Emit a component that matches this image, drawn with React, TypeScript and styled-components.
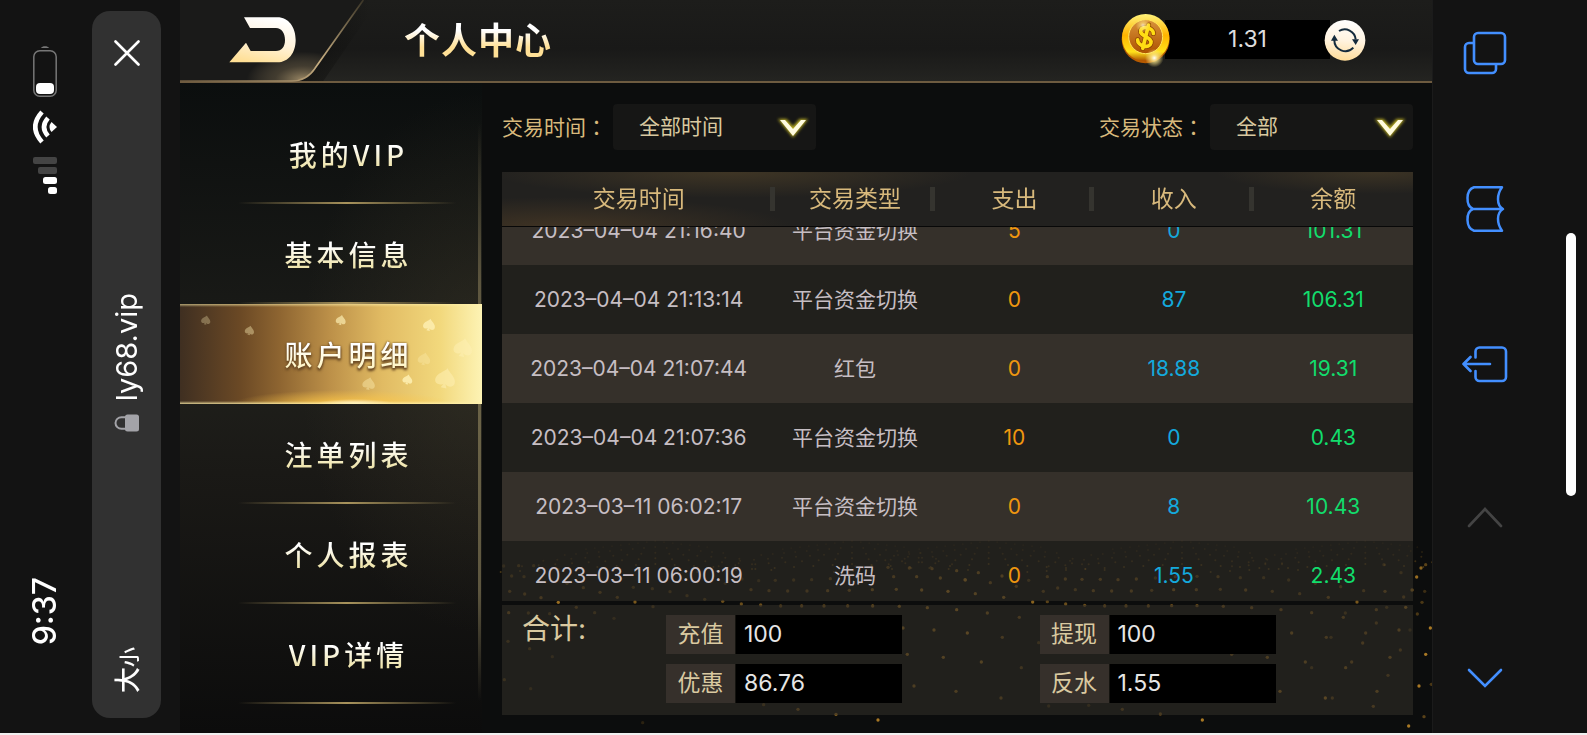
import React, { useLayoutEffect, useRef } from "react";
import styled, { createGlobalStyle } from "styled-components";

const GlobalStyle = createGlobalStyle`
  *, *::before, *::after { box-sizing: border-box; }
  body {
    margin: 0;
    background: #131313;
    color: #fff;
    font-family: Inter, "Noto Sans CJK SC", sans-serif;
  }
  button, select { font-family: inherit; }
  button {
    margin: 0;
    padding: 0;
    border: 0;
    background: none;
    color: inherit;
    cursor: pointer;
  }
  svg { display: block; }
`;

const gold = "#d8b97c";
const cream = "#d9c9a0";
const blue = "#438fff";

/* ---------- device frame ---------- */

const Screen = styled.div`
  display: grid;
  grid-template-columns: 180px minmax(0, 1fr) 155px;
  height: 100vh;
  min-height: 640px;
  border-bottom: 2px solid #f0f0f0;
`;

const BrowserSide = styled.aside`
  display: grid;
  grid-template-columns: 92px 69px;
  padding: 11px 0 15px;
  min-height: 0;
`;

const StatusColumn = styled.div`
  display: flex;
  flex-direction: column;
  align-items: center;
  justify-content: space-between;
  padding: 34px 2px 73px 0;
`;

const StatusIcons = styled.div`
  display: flex;
  flex-direction: column;
  align-items: center;
  gap: 13px;
`;

const VerticalText = styled.span<{ $size: number; $weight?: number }>`
  writing-mode: vertical-rl;
  transform: rotate(180deg);
  font-size: ${(p) => p.$size}px;
  font-weight: ${(p) => p.$weight ?? 400};
  line-height: 1;
  white-space: nowrap;
`;

const AddressBar = styled.div`
  display: grid;
  grid-template-rows: 1fr auto 1fr;
  justify-items: center;
  padding: 29px 0 25px;
  border-radius: 18px;
  background: #313131;
`;

const CloseButton = styled.button`
  align-self: start;
`;

const Address = styled.div`
  display: flex;
  flex-direction: column;
  align-items: center;
  gap: 13px;
  padding-bottom: 8px;
`;

const TextSizeButton = styled.button`
  align-self: end;
  writing-mode: vertical-rl;
  text-orientation: sideways;
  transform: rotate(180deg);
  padding-right: 4px;
  font-size: 26px;
  font-weight: 500;
  line-height: 32px;

  small {
    font-size: 20px;
  }
`;

const ToolSide = styled.aside`
  display: grid;
  grid-template-columns: 104px 1fr;
  border-left: 1px solid #1b1b1b;
`;

const ToolNav = styled.nav`
  display: flex;
  flex-direction: column;
  align-items: center;
  justify-content: space-between;
  padding: 30px 0 33px;
`;

const ToolButton = styled.button<{ $dim?: boolean }>`
  color: ${(p) => (p.$dim ? "#444" : blue)};
`;

const HandleTrack = styled.div`
  display: flex;
  align-items: center;
  padding: 0 0 4px 29px;
`;

const Handle = styled.div`
  width: 10px;
  height: 36%;
  border-radius: 5px;
  background: #fff;
`;

/* ---------- game shell ---------- */

const Game = styled.div`
  display: grid;
  grid-template-rows: 83px minmax(0, 1fr);
  min-width: 0;
  min-height: 0;
  background: #0c0d0d;
`;

const Header = styled.header`
  display: flex;
  align-items: center;
  padding-right: 66px;
  border-bottom: 2px solid #6e5b40;
  background: linear-gradient(#1d1d1b, #191918 60%, #242421);
`;

const BackButton = styled.button`
  margin-bottom: -2px;
`;

const Title = styled.h1`
  flex: 1;
  margin: 0 0 0 34px;
  font-size: 36px;
  font-weight: 700;
  line-height: 52px;
  letter-spacing: 1px;
  color: transparent;
  background: linear-gradient(#fff 30%, #ffe096 62%);
  background-clip: text;
`;

const Wallet = styled.div`
  display: flex;
  align-items: center;
`;

const Balance = styled.output`
  width: 165px;
  margin: 0 -6px 2px;
  background: #000;
  color: #dedede;
  font-size: 23px;
  line-height: 39px;
  text-align: center;
`;

const CoinIcon = styled.svg`
  position: relative;
  z-index: 1;
`;

const RefreshButton = styled.button`
  position: relative;
`;

const Body = styled.div`
  display: grid;
  grid-template-columns: 302px minmax(0, 1fr);
  min-height: 0;
`;

/* ---------- side menu ---------- */

const SideMenu = styled.nav`
  display: flex;
  flex-direction: column;
  padding-top: 21px;
  background:
    linear-gradient(transparent 3%, #5d563f 28%, #6b6347 50%, #5d563f 75%, transparent 92%) no-repeat 298px 20px / 3px 100%,
    radial-gradient(180px 270px at 300px 280px, rgba(80, 72, 50, 0.32), transparent),
    linear-gradient(#0b0e0e, #1e1e1a 48%, #1a1916 60%, #0c0c0c);
`;

const MenuItem = styled.button<{ $active?: boolean }>`
  position: relative;
  height: 100px;
  padding-left: 35px;
  font-family: "Noto Sans CJK SC", sans-serif;
  font-size: 28px;
  font-weight: 500;
  line-height: 40px;
  letter-spacing: 4px;
  background: ${(p) =>
    p.$active
      ? `linear-gradient(rgba(255,240,170,.6), transparent 3%, transparent 97%, rgba(255,240,170,.8)),
         radial-gradient(40px 5px at 58% 100%, #fffce8, transparent),
         radial-gradient(110px 14px at 54% 100%, rgba(255,200,70,.9), transparent),
         linear-gradient(90deg, #3f2f21, #6b4925 20%, #8e6531 33%, #bd9149 50%, #e1bb63 67%, #f2d87c 86%, #fdf3b4)`
      : `linear-gradient(90deg, transparent, #a8935c 50%, transparent) no-repeat 58px 98px / 218px 2px`};
`;

const MenuText = styled.span<{ $active?: boolean }>`
  position: relative;
  color: transparent;
  background: linear-gradient(#fff 30%, ${(p) => (p.$active ? "#fff6c8" : "#efe5ae")} 80%);
  background-clip: text;
  filter: ${(p) => (p.$active ? "drop-shadow(0 2px 1px #6b4a24) drop-shadow(0 0 1px #6b4a24)" : "none")};
`;

const Spades = styled.svg`
  position: absolute;
  inset: 0;
`;

/* ---------- account details ---------- */

const Main = styled.main`
  position: relative;
  display: flex;
  flex-direction: column;
  min-height: 0;
  padding: 21px 19px 18px 20px;
`;

const DotField = styled.svg`
  position: absolute;
  right: 0;
  bottom: 0;
  width: 100%;
  height: 203px;
`;

const Filters = styled.div`
  position: relative;
  display: flex;
  justify-content: space-between;
  height: 46px;
  margin-bottom: 22px;
`;

const Filter = styled.div`
  display: flex;
  align-items: center;
  gap: 6px;
`;

const FilterLabel = styled.label`
  color: ${gold};
  font-size: 21px;
  line-height: 46px;

  span {
    font-family: "Noto Sans CJK TC", sans-serif;
  }
`;

const SelectBox = styled.div`
  position: relative;
  width: 203px;

  svg {
    position: absolute;
    top: 9px;
    right: 6px;
    pointer-events: none;
  }
`;

const Select = styled.select`
  display: block;
  appearance: none;
  width: 100%;
  height: 46px;
  padding: 0 48px 2px 26px;
  border: 0;
  border-radius: 4px;
  background: #161615;
  color: ${cream};
  font-size: 21px;
`;

const TableScroller = styled.div`
  position: relative;
  flex: 1;
  min-height: 0;
  margin-bottom: 4px;
  overflow-y: auto;
  scrollbar-width: none;
`;

const Table = styled.table`
  width: 100%;
  table-layout: fixed;
  border-spacing: 0;
  text-align: center;

  thead {
    position: sticky;
    top: 0;
    background:
      radial-gradient(240px 26px at 230px 0, rgba(98, 78, 44, 0.45), transparent),
      radial-gradient(230px 30px at 60px 100%, rgba(100, 74, 42, 0.45), transparent),
      radial-gradient(160px 22px at 96% 0, rgba(98, 78, 44, 0.4), transparent),
      #22211f;
  }
`;

const HeadCell = styled.th<{ $first?: boolean }>`
  width: ${(p) => (p.$first ? "30%" : "17.5%")};
  height: 55px;
  padding: 0;
  border-bottom: 1px solid #080808;
  color: ${gold};
  font-size: 23px;
  font-weight: 400;
  line-height: 28px;

  &:not(:last-child) {
    background: linear-gradient(#35342f, #35342f) no-repeat right center / 5px 24px;
  }
`;

const Row = styled.tr`
  background: rgba(49, 45, 38, 0.6);

  &:nth-child(odd) {
    background: rgba(81, 71, 62, 0.6);
  }
`;

const Cell = styled.td<{ $tone?: string }>`
  height: 69px;
  padding: 0;
  color: ${(p) => p.$tone ?? "#c6bec3"};
  font-size: 21px;
  line-height: 28px;
  white-space: nowrap;
`;

const Totals = styled.section`
  position: relative;
  display: grid;
  grid-template-columns: 144px 1fr 1fr;
  height: 110px;
  padding: 10px 0 0 20px;
  background: rgba(49, 45, 38, 0.6);
`;

const TotalsTitle = styled.h2`
  margin: 0;
  color: ${cream};
  font-size: 28px;
  font-weight: 400;
  line-height: 28px;
`;

const TotalsList = styled.dl`
  display: flex;
  flex-direction: column;
  gap: 10px;
  margin: 0;
`;

const Total = styled.div`
  display: flex;
  height: 39px;
  font-size: 23px;
  line-height: 38px;

  dt {
    width: 69px;
    background: #36302b;
    color: ${cream};
    text-align: center;
  }

  dd {
    width: 167px;
    margin: 0;
    padding-left: 8px;
    border-left: 1px solid #14130f;
    background: #000;
    color: #e6e6e6;
  }
`;

/* ---------- data ---------- */

const menu = ["我的VIP", "基本信息", "账户明细", "注单列表", "个人报表", "VIP详情"];
const activeMenu = "账户明细";

const columns = ["交易时间", "交易类型", "支出", "收入", "余额"];

const records = [
  ["2023–04–04 21:16:40", "平台资金切换", "5", "0", "101.31"],
  ["2023–04–04 21:13:14", "平台资金切换", "0", "87", "106.31"],
  ["2023–04–04 21:07:44", "红包", "0", "18.88", "19.31"],
  ["2023–04–04 21:07:36", "平台资金切换", "10", "0", "0.43"],
  ["2023–03–11 06:02:17", "平台资金切换", "0", "8", "10.43"],
  ["2023–03–11 06:00:19", "洗码", "0", "1.55", "2.43"],
];

const tones = [undefined, undefined, "#f0970f", "#14a9dc", "#12dd6c"];

const totals = [
  [["充值", "100"], ["优惠", "86.76"]],
  [["提现", "100"], ["反水", "1.55"]],
];

const spades: [number, number, number, number][] = [
  [78, 48, 14, 0.3], [209, 79, 14, 0.4], [483, 48, 15, 0.65], [748, 62, 18, 0.75],
  [850, 130, 28, 0.45], [733, 164, 19, 0.3], [797, 222, 30, 0.5], [683, 226, 15, 0.8], [567, 238, 19, 0.4],
];

/* Sparkling dots near the bottom edge: x, y, brightness */
const sparkles: [number, number, number][] = [
  [65, 108, .3], [110, 107, .4], [155, 107, .4], [89, 138, .4], [126, 140, .4], [83, 184, .5], [128, 192, .5],
  [177, 203, .6], [229, 217, .9], [80, 248, .6], [139, 249, .4], [203, 251, .4], [283, 232, .5], [338, 248, .4],
  [78, 334, .4], [143, 356, .4], [211, 380, .3], [67, 449, .4], [146, 476, .3], [396, 265, .3], [513, 230, .4],
  [459, 216, .7], [406, 202, .5], [354, 187, .5], [304, 173, .5], [255, 160, .5], [454, 172, .4], [511, 176, .4],
  [564, 185, .4], [615, 197, .4], [668, 208, .4], [722, 214, .6], [778, 222, .6], [836, 225, .6], [896, 228, .5],
  [959, 228, .6], [1026, 228, .6], [1097, 228, .6], [1172, 228, .7], [1252, 229, .8], [1336, 233, .8], [1424, 239, .9],
  [807, 179, .5], [861, 182, .5], [917, 183, .5], [975, 183, .5], [1037, 182, .6], [1102, 181, .6], [1171, 179, .7],
  [1243, 178, .7], [1319, 180, .8], [1398, 184, .9], [730, 160, .3], [780, 147, .3], [830, 152, .3], [880, 151, .4],
  [935, 150, .4], [989, 149, .4], [1045, 146, .5], [1170, 140, .5], [1235, 140, .6], [1304, 140, .7], [1375, 144, .7],
  [1450, 150, .8], [1480, 191, .8], [1565, 202, .8], [1424, 122, .7], [1350, 116, .6], [1282, 114, .6], [1218, 112, .5],
  [1263, 294, .8], [1356, 300, .8], [1456, 309, .9], [1276, 373, .8], [1384, 382, .8], [1498, 396, .8],
  [1296, 468, .7], [1422, 484, .7], [1557, 504, .6], [845, 524, .4], [948, 538, .6], [1062, 553, .8], [1188, 570, 1],
  [482, 578, .2], [1516, 249, .7], [1612, 262, .6], [1561, 322, .6], [1618, 413, .5], [1670, 338, .4], [1700, 528, .3],
  [1820, 526, .3], [1921, 538, .5], [2035, 552, .6], [2161, 570, 1], [1652, 216, .8], [1696, 215, .5], [1751, 222, .6],
  [1808, 226, .6], [1868, 228, .6], [1932, 228, .6], [1999, 228, .6], [2069, 227, .6], [2145, 227, .6], [2224, 229, .6],
  [2309, 233, .6], [2397, 239, .6], [2489, 248, .6], [2584, 262, .6], [2429, 309, .7], [2533, 322, .6], [2547, 322, .4],
  [2356, 382, .7], [2249, 373, .6], [2470, 396, .7], [2489, 413, .4], [2591, 413, .7], [2609, 396, .6], [2394, 484, .8],
  [2530, 504, .9], [2551, 504, .5], [2685, 484, .7], [2674, 529, .6], [2718, 436, .5], [2724, 382, .7], [2755, 360, .5],
  [2751, 300, .7], [2784, 300, .3], [2642, 339, .6], [2651, 309, .6], [2683, 279, .5], [2683, 239, .6], [2714, 232, .4],
  [2771, 232, .8], [2590, 249, .4], [2625, 216, .7], [2539, 202, .6], [2453, 191, .5], [2371, 184, .5], [2291, 180, .6],
  [2215, 178, .5], [2143, 179, .6], [2075, 179, .7], [2009, 181, .5], [1948, 183, .6], [1889, 183, .6], [1834, 182, .6],
  [1780, 179, .5], [1727, 174, .5], [1684, 184, .5], [1603, 169, .6], [1525, 158, .6], [1449, 149, .7], [1489, 128, .7],
  [1560, 138, .7], [1640, 151, .4], [1696, 140, .5], [1750, 147, .6], [1800, 148, .6], [1855, 148, .6], [1908, 149, .6],
  [1963, 147, .6], [2020, 144, .4], [2080, 140, .5], [2145, 139, .5], [2208, 140, .5], [2275, 143, .4], [2345, 143, .4],
  [2420, 150, .4], [2500, 160, .5], [2576, 170, .5], [2645, 182, .5], [2709, 184, .6], [2765, 201, .5], [2790, 180, .8],
  [2804, 141, .9], [2817, 114, .8], [2831, 104, .5], [2845, 294, 1], [2831, 373, 1], [2811, 468, 1], [2848, 463, .4],
  [2780, 588, 1], [2826, 560, .5], [2806, 252, .4], [2820, 217, .4], [2828, 184, .3], [2757, 128, .4], [2706, 104, .4],
];

/* Faint rows of dots that fan out from a vanishing point */
const fans = [520, 1110, 1520, 2100, 2650].flatMap((cx) =>
  [-8, -7, -6, -5, -4, -3, -2, -1, 0, 1, 2, 3, 4, 5, 6].flatMap((ray) =>
    [0, 1, 2, 3, 4].map((step) => ({
      x: cx + ray * (26 + step * 8),
      y: 34 + step * 17 + Math.abs(ray) * 3,
      o: 0.1 + step * 0.07,
    })),
  ),
);

/* ---------- drawings ---------- */

const BackDrawing = () => (
  <svg width="190" height="83" viewBox="0 0 570 249" aria-hidden="true">
    <defs>
      <linearGradient id="arrow" x1="0.6" y1="0" x2="0.3" y2="1">
        <stop offset="0" stopColor="#fff" />
        <stop offset="0.5" stopColor="#fff3dc" />
        <stop offset="1" stopColor="#ffdf95" />
      </linearGradient>
      <linearGradient id="edge" x1="0" y1="1" x2="1" y2="0">
        <stop offset="0" stopColor="#6e5b40" />
        <stop offset="0.5" stopColor="#c9b083" />
        <stop offset="1" stopColor="#3b3527" />
      </linearGradient>
      <radialGradient id="cornerGlow" cx="370" cy="240" r="170" gradientUnits="userSpaceOnUse" gradientTransform="translate(0 120) scale(1 .5)">
        <stop offset="0" stopColor="#b39d74" stopOpacity="0.85" />
        <stop offset="0.5" stopColor="#8d7b5a" stopOpacity="0.35" />
        <stop offset="1" stopColor="#b39d74" stopOpacity="0" />
      </radialGradient>
      <linearGradient id="fold" x1="0" x2="1">
        <stop offset="0" stopColor="#0b0b0a" />
        <stop offset="1" stopColor="#0b0b0a" stopOpacity="0" />
      </linearGradient>
    </defs>
    <path d="M550 0 405 210Q385 240 350 243H430L570 40V0Z" fill="url(#fold)" opacity="0.6" />
    <path d="M0 0H550L405 205Q380 243 335 243H0Z" fill="#1a1a19" />
    <path d="M0 0H550L405 205Q380 243 335 243H0Z" fill="url(#cornerGlow)" />
    <path d="M0 243H335Q380 243 405 205L550 0" fill="none" stroke="url(#edge)" strokeWidth="5" />
    <path d="M192 52H292C326 52 347 82 347 120S326 187 292 187H148L198 128 212 153H288C305 153 315 140 315 120S305 84 288 84H210Z" fill="url(#arrow)" />
  </svg>
);

const Coin = () => (
  <CoinIcon width="50" height="54" viewBox="0 0 150 162" aria-hidden="true">
    <defs>
      <linearGradient id="coinRim" x1="0" y1="0" x2="0" y2="1">
        <stop offset="0" stopColor="#fff27a" />
        <stop offset="0.45" stopColor="#ffb400" />
        <stop offset="0.8" stopColor="#ffe11a" />
        <stop offset="1" stopColor="#a84a00" />
      </linearGradient>
      <linearGradient id="coinFace" x1="0" y1="0" x2="0" y2="1">
        <stop offset="0" stopColor="#d9923a" />
        <stop offset="1" stopColor="#ad5200" />
      </linearGradient>
      <radialGradient id="flare">
        <stop offset="0" stopColor="#fff" />
        <stop offset="0.35" stopColor="#ffe98a" stopOpacity="0.8" />
        <stop offset="1" stopColor="#ffe98a" stopOpacity="0" />
      </radialGradient>
    </defs>
    <circle cx="74" cy="76" r="72" fill="#b65a00" />
    <circle cx="74" cy="71" r="71" fill="url(#coinRim)" />
    <circle cx="74" cy="68" r="51" fill="url(#coinFace)" stroke="#ffe55a" strokeWidth="3" />
    <g transform="rotate(14 74 68)" fill="none" strokeLinecap="round">
      <path d="M74 32V104M94 53C92 38 56 36 55 53 54 72 94 63 94 83 94 102 56 100 53 83" stroke="#8c4200" strokeWidth="15" />
      <path d="M74 32V104M94 53C92 38 56 36 55 53 54 72 94 63 94 83 94 102 56 100 53 83" stroke="#ffdc14" strokeWidth="11" />
    </g>
    <circle cx="66" cy="34" r="22" fill="url(#flare)" opacity="0.7" />
    <circle cx="100" cy="132" r="28" fill="url(#flare)" />
  </CoinIcon>
);

const RefreshDrawing = () => (
  <svg width="42" height="42" viewBox="0 0 126 126" aria-hidden="true">
    <defs>
      <linearGradient id="disc" x1="0.5" y1="0" x2="0.4" y2="1">
        <stop offset="0" stopColor="#fff" />
        <stop offset="0.5" stopColor="#fff3e0" />
        <stop offset="1" stopColor="#ffdc98" />
      </linearGradient>
    </defs>
    <circle cx="63" cy="61" r="61" fill="url(#disc)" />
    <g fill="none" stroke="#142a3c" strokeWidth="6">
      <path d="M45 33A33 33 0 0 1 95 58" />
      <path d="M88 83A33 33 0 0 1 31 60" />
    </g>
    <path d="M84 58H105L95 75ZM21 62H42L31 44Z" fill="#142a3c" />
  </svg>
);

const GlowChevron = () => (
  <svg width="34" height="30" viewBox="0 0 34 30" aria-hidden="true">
    <defs>
      <filter id="chevGlow" x="-30%" y="-30%" width="160%" height="160%">
        <feGaussianBlur stdDeviation="1.5" />
      </filter>
    </defs>
    <path d="M4 7H10L17 15 24 7H30L17 23Z" fill="#c9bd28" stroke="#b0a424" strokeWidth="2" filter="url(#chevGlow)" />
    <path d="M4 7H9L17 16 25 7H30L17 23Z" fill="#fffbe0" />
  </svg>
);

const App = () => {
  const scroller = useRef<HTMLDivElement>(null);

  /* Open with the newest record partly scrolled under the heading */
  useLayoutEffect(() => {
    if (scroller.current) scroller.current.scrollTop = 31;
  }, []);

  return (
    <>
      <GlobalStyle />
      <Screen>
        <BrowserSide>
          <StatusColumn>
            <StatusIcons>
              <svg width="24" height="52" viewBox="0 0 24 52" aria-hidden="true">
                <path d="M8 3C9 .5 15 .5 16 3Z" fill="#777" />
                <rect x="0.8" y="5.8" width="22.4" height="45.4" rx="6" fill="none" stroke="#777" strokeWidth="1.5" />
                <rect x="3" y="38" width="18" height="11" rx="4" fill="#fff" />
              </svg>
              <svg width="24" height="34" viewBox="0 0 24 34" fill="#fff" aria-hidden="true">
                <path d="M24 17 18.500 12Q14.500 17 18.500 22Z" />
                <path d="M9 2Q-4.500 17 9 32" fill="none" stroke="#fff" strokeWidth="4.600" />
                <path d="M15 8Q7 17 15 26" fill="none" stroke="#fff" strokeWidth="4.600" />
              </svg>
              <svg width="24" height="37" viewBox="0 0 24 37" fill="#fff" aria-hidden="true">
                <rect width="24" height="7" rx="2" fill="#444" />
                <rect x="5" y="10" width="19" height="7" rx="2" fill="#444" />
                <rect x="10" y="20" width="14" height="7" rx="2.500" />
                <rect x="15" y="30" width="9" height="7" rx="2.500" />
              </svg>
            </StatusIcons>
            <VerticalText $size={32} $weight={500}>9:37</VerticalText>
          </StatusColumn>
          <AddressBar>
            <CloseButton aria-label="关闭">
              <svg width="26" height="26" viewBox="0 0 26 26" stroke="#fff" strokeWidth="2.600" strokeLinecap="round" aria-hidden="true">
                <path d="M1.500 1.500 24.500 24.500M24.500 1.500 1.500 24.500" />
              </svg>
            </CloseButton>
            <Address>
              <VerticalText $size={29}>ly68.vip</VerticalText>
              <svg width="26" height="18" viewBox="0 0 26 18" aria-hidden="true">
                <path d="M12 3.200H7.500A6 5.800 0 0 0 7.500 14.800H12" fill="none" stroke="#a3a3a8" strokeWidth="2" />
                <rect x="11" y="0.500" width="14" height="17" rx="2.500" fill="#a3a3a8" />
              </svg>
            </Address>
            <TextSizeButton>大<small>小</small></TextSizeButton>
          </AddressBar>
        </BrowserSide>

        <Game>
          <Header>
            <BackButton aria-label="返回"><BackDrawing /></BackButton>
            <Title>个人中心</Title>
            <Wallet>
              <Coin />
              <Balance>1.31</Balance>
              <RefreshButton aria-label="刷新"><RefreshDrawing /></RefreshButton>
            </Wallet>
          </Header>
          <Body>
            <SideMenu>
              {menu.map((name) => {
                const active = name === activeMenu;
                return (
                  <MenuItem key={name} $active={active} aria-current={active ? "page" : undefined}>
                    {active && (
                      <Spades width="302" height="100" viewBox="0 0 906 300" aria-hidden="true">
                        {spades.map(([x, y, r, o]) => (
                          <path
                            key={x}
                            transform={`translate(${x} ${y}) rotate(12) scale(${r / 10})`}
                            d="M0-10C2-6 10-3 10 3 10 8 4 9 1 6L3 10H-3L-1 6C-4 9-10 8-10 3-10-3-2-6 0-10Z"
                            fill="#fff2b8"
                            opacity={o}
                          />
                        ))}
                      </Spades>
                    )}
                    <MenuText $active={active}>{name}</MenuText>
                  </MenuItem>
                );
              })}
            </SideMenu>

            <Main>
              <DotField viewBox="0 0 2850 609" preserveAspectRatio="xMaxYMax slice" fill="#a87824" aria-hidden="true">
                {fans.map((d, i) => <circle key={i} cx={d.x} cy={d.y} r="3" opacity={d.o} />)}
                {sparkles.map(([x, y, o], i) => <circle key={i} cx={x} cy={y} r="5" opacity={o} />)}
              </DotField>
              <Filters>
                <Filter>
                  <FilterLabel htmlFor="time">交易时间<span>：</span></FilterLabel>
                  <SelectBox>
                    <Select id="time"><option>全部时间</option></Select>
                    <GlowChevron />
                  </SelectBox>
                </Filter>
                <Filter>
                  <FilterLabel htmlFor="state">交易状态<span>：</span></FilterLabel>
                  <SelectBox>
                    <Select id="state"><option>全部</option></Select>
                    <GlowChevron />
                  </SelectBox>
                </Filter>
              </Filters>

              <TableScroller ref={scroller}>
                <Table>
                  <thead>
                    <tr>
                      {columns.map((c, i) => <HeadCell key={c} scope="col" $first={i === 0}>{c}</HeadCell>)}
                    </tr>
                  </thead>
                  <tbody>
                    {records.map((r) => (
                      <Row key={r[0]}>
                        {r.map((v, i) => <Cell key={i} $tone={tones[i]}>{v}</Cell>)}
                      </Row>
                    ))}
                  </tbody>
                </Table>
              </TableScroller>

              <Totals>
                <TotalsTitle>合计:</TotalsTitle>
                {totals.map((group) => (
                  <TotalsList key={group[0][0]}>
                    {group.map(([name, value]) => (
                      <Total key={name}>
                        <dt>{name}</dt>
                        <dd>{value}</dd>
                      </Total>
                    ))}
                  </TotalsList>
                ))}
              </Totals>
            </Main>
          </Body>
        </Game>

        <ToolSide>
          <ToolNav>
            <ToolButton aria-label="标签页">
              <svg width="46" height="46" viewBox="0 0 46 46" fill="none" stroke="currentColor" strokeWidth="2.600" aria-hidden="true">
                <rect x="12" y="3" width="31" height="31" rx="4" />
                <path d="M12 13H7A4 4 0 0 0 3 17V39A4 4 0 0 0 7 43H30A4 4 0 0 0 34 39V34" />
              </svg>
            </ToolButton>
            <ToolButton aria-label="书签">
              <svg width="46" height="46" viewBox="0 0 46 46" fill="none" stroke="currentColor" strokeWidth="2.500" strokeLinejoin="round" aria-hidden="true">
                <path d="M40 1.300H12C3.500 4 3.500 20 11 23 3.500 26 3.500 42 12 44.700H40C35 38 34 27 41 23 34 19 35 8 40 1.300ZM11 23H41" />
              </svg>
            </ToolButton>
            <ToolButton aria-label="分享">
              <svg width="46" height="46" viewBox="0 0 46 46" fill="none" stroke="currentColor" strokeWidth="2.600" strokeLinecap="round" strokeLinejoin="round" aria-hidden="true">
                <path d="M13.500 15.500V9.500A4 4 0 0 1 17.500 5.500H40A4 4 0 0 1 44 9.500V35A4 4 0 0 1 40 39H17.500A4 4 0 0 1 13.500 35V29M28 22H1.500M8.500 15 1.500 22 8.500 29" />
              </svg>
            </ToolButton>
            <ToolButton aria-label="后退" $dim>
              <svg width="46" height="46" viewBox="0 0 46 46" fill="none" stroke="currentColor" strokeWidth="2.600" strokeLinecap="round" aria-hidden="true">
                <path d="M7 28 23 11 39 28" />
              </svg>
            </ToolButton>
            <ToolButton aria-label="前进">
              <svg width="46" height="46" viewBox="0 0 46 46" fill="none" stroke="currentColor" strokeWidth="2.600" strokeLinecap="round" aria-hidden="true">
                <path d="M7 16 23 32 39 16" />
              </svg>
            </ToolButton>
          </ToolNav>
          <HandleTrack><Handle /></HandleTrack>
        </ToolSide>
      </Screen>
    </>
  );
};

export default App;
